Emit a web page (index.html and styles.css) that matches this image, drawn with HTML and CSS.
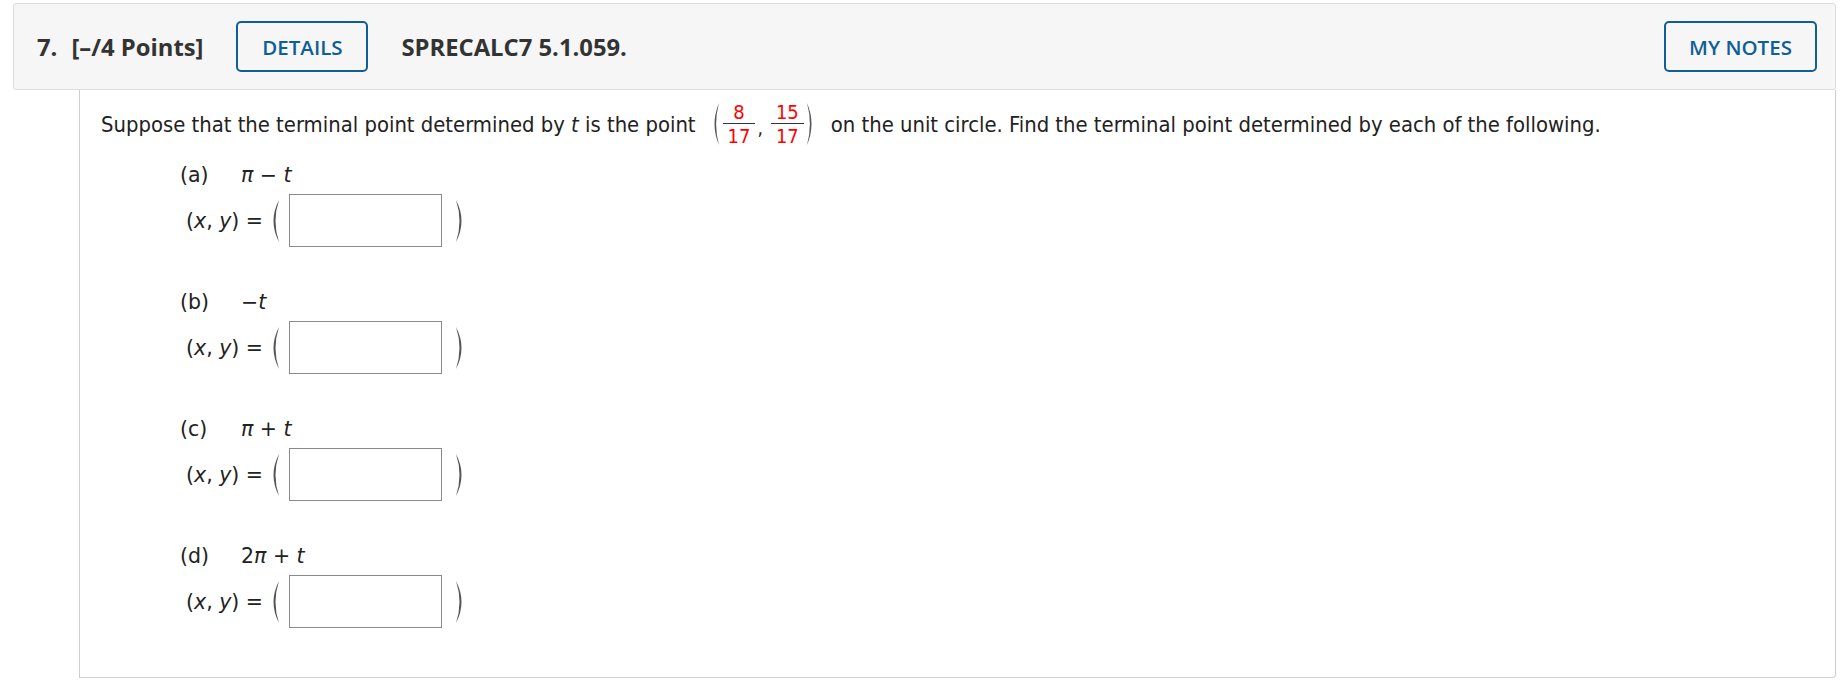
FILE: index.html
```html
<!DOCTYPE html>
<html>
<head>
<meta charset="utf-8">
<link rel="stylesheet" href="styles.css">
</head>
<body>
<div class="wrap">
  <div class="header">
    <span class="qnum">7.</span>
    <span class="points">[–/4 Points]</span>
    <button class="btn details">DETAILS</button>
    <span class="code">SPRECALC7 5.1.059.</span>
    <button class="btn notes">MY NOTES</button>
  </div>
  <div class="content">
    <p class="prompt">
      <span>Suppose that the terminal point determined by <i>t</i> is the point</span>
      <span class="point">
        <svg class="paren" width="10" height="44" viewBox="0 0 10 44"><path d="M9 1 Q0 22 9 43 Q3.2 22 9 1Z"/></svg>
        <span class="frac"><span class="n">8</span><span class="d">17</span></span><span class="comma">,</span>
        <span class="frac"><span class="n">15</span><span class="d">17</span></span>
        <svg class="paren" width="10" height="44" viewBox="0 0 10 44"><path d="M1 1 Q10 22 1 43 Q6.8 22 1 1Z"/></svg>
      </span>
      <span>on the unit circle. Find the terminal point determined by each of the following.</span>
    </p>

    <div class="part">
      <div class="label"><span class="letter">(a)</span><span class="expr"><i>π</i> − <i>t</i></span></div>
      <div class="answer">
        <span class="xy">(<i>x</i>, <i>y</i>) =</span>
        <svg class="bparen" width="12" height="42" viewBox="0 0 12 42"><path d="M11 0 Q0 21 11 42 Q4 21 11 0Z"/></svg>
        <span class="box"></span>
        <svg class="bparen" width="12" height="42" viewBox="0 0 12 42"><path d="M1 0 Q12 21 1 42 Q8 21 1 0Z"/></svg>
      </div>
    </div>

    <div class="part">
      <div class="label"><span class="letter">(b)</span><span class="expr">−<i>t</i></span></div>
      <div class="answer">
        <span class="xy">(<i>x</i>, <i>y</i>) =</span>
        <svg class="bparen" width="12" height="42" viewBox="0 0 12 42"><path d="M11 0 Q0 21 11 42 Q4 21 11 0Z"/></svg>
        <span class="box"></span>
        <svg class="bparen" width="12" height="42" viewBox="0 0 12 42"><path d="M1 0 Q12 21 1 42 Q8 21 1 0Z"/></svg>
      </div>
    </div>

    <div class="part">
      <div class="label"><span class="letter">(c)</span><span class="expr"><i>π</i> + <i>t</i></span></div>
      <div class="answer">
        <span class="xy">(<i>x</i>, <i>y</i>) =</span>
        <svg class="bparen" width="12" height="42" viewBox="0 0 12 42"><path d="M11 0 Q0 21 11 42 Q4 21 11 0Z"/></svg>
        <span class="box"></span>
        <svg class="bparen" width="12" height="42" viewBox="0 0 12 42"><path d="M1 0 Q12 21 1 42 Q8 21 1 0Z"/></svg>
      </div>
    </div>

    <div class="part">
      <div class="label"><span class="letter">(d)</span><span class="expr">2<i>π</i> + <i>t</i></span></div>
      <div class="answer">
        <span class="xy">(<i>x</i>, <i>y</i>) =</span>
        <svg class="bparen" width="12" height="42" viewBox="0 0 12 42"><path d="M11 0 Q0 21 11 42 Q4 21 11 0Z"/></svg>
        <span class="box"></span>
        <svg class="bparen" width="12" height="42" viewBox="0 0 12 42"><path d="M1 0 Q12 21 1 42 Q8 21 1 0Z"/></svg>
      </div>
    </div>
  </div>
</div>
</body>
</html>
```

FILE: styles.css
```css
html, body {
  margin: 0;
  padding: 0;
  background: #ffffff;
}

.wrap {
  padding: 3px 9px 0 13px;
}

.header {
  display: flex;
  align-items: center;
  height: 85px;
  background: #f6f6f6;
  border: 1px solid #dcdcdc;
  border-radius: 3px;
  padding-left: 23px;
  padding-right: 18px;
  font-family: "Open Sans", sans-serif;
  color: #333333;
}

.qnum {
  font-weight: 700;
  font-size: 23.8px;
}

.points {
  font-weight: 700;
  font-size: 23.8px;
  margin-left: 14px;
}

.code {
  font-weight: 700;
  font-size: 23.8px;
  margin-left: 33px;
}

.btn {
  font-family: "Open Sans", sans-serif;
  font-size: 20.5px;
  font-weight: 600;
  color: #0e5f96;
  background: transparent;
  border: 2px solid #0e5f96;
  border-radius: 5px;
  height: 51px;
  padding: 0;
  text-align: center;
}

.details {
  width: 132px;
  margin-left: 33px;
}

.notes {
  width: 153px;
  margin-left: auto;
}

.content {
  margin-left: 66px;
  height: 588px;
  border: 1px solid #cfcfcf;
  border-top: none;
  border-radius: 0 0 4px 0;
  padding-left: 21px;
  box-sizing: border-box;
  font-family: "DejaVu Sans", Verdana, sans-serif;
  color: #222222;
  font-size: 20.5px;
}

.prompt {
  margin: 0;
  padding-top: 12px;
  display: flex;
  align-items: center;
  height: 44px;
  font-family: "DejaVu Sans Condensed", "DejaVu Sans", sans-serif;
  font-stretch: condensed;
  font-size: 21.85px;
}

.point {
  display: inline-flex;
  align-items: center;
  margin: 0 15px 0 14px;
}

.paren path, .bparen path {
  fill: #555555;
}

.frac {
  display: inline-flex;
  flex-direction: column;
  align-items: center;
  color: #ff0000;
  font-size: 20px;
  line-height: 20px;
  margin: 0 2px 0 3px;
}

.frac .n {
  border-bottom: 1px solid #333333;
  padding: 0 5px 1px;
  align-self: stretch;
  text-align: center;
}

.frac .d {
  padding: 2px 5px 0;
}

.comma {
  align-self: center;
  margin: 8px 5px 0 0;
  font-size: 19px;
}

.part {
  margin-left: 79px;
  height: 127px;
}

.part:first-of-type {
  margin-top: 17px;
}

.label {
  display: flex;
  align-items: center;
  height: 24px;
}

.letter {
  width: 61px;
}

.answer {
  display: flex;
  align-items: center;
  margin-top: 7px;
  margin-left: 6px;
}

.xy {
  width: 82px;
}

.bparen {
  display: block;
}

.box {
  display: block;
  width: 151px;
  height: 51px;
  border: 1px solid #8a8a8a;
  margin: 0 13px 0 9px;
}
```
